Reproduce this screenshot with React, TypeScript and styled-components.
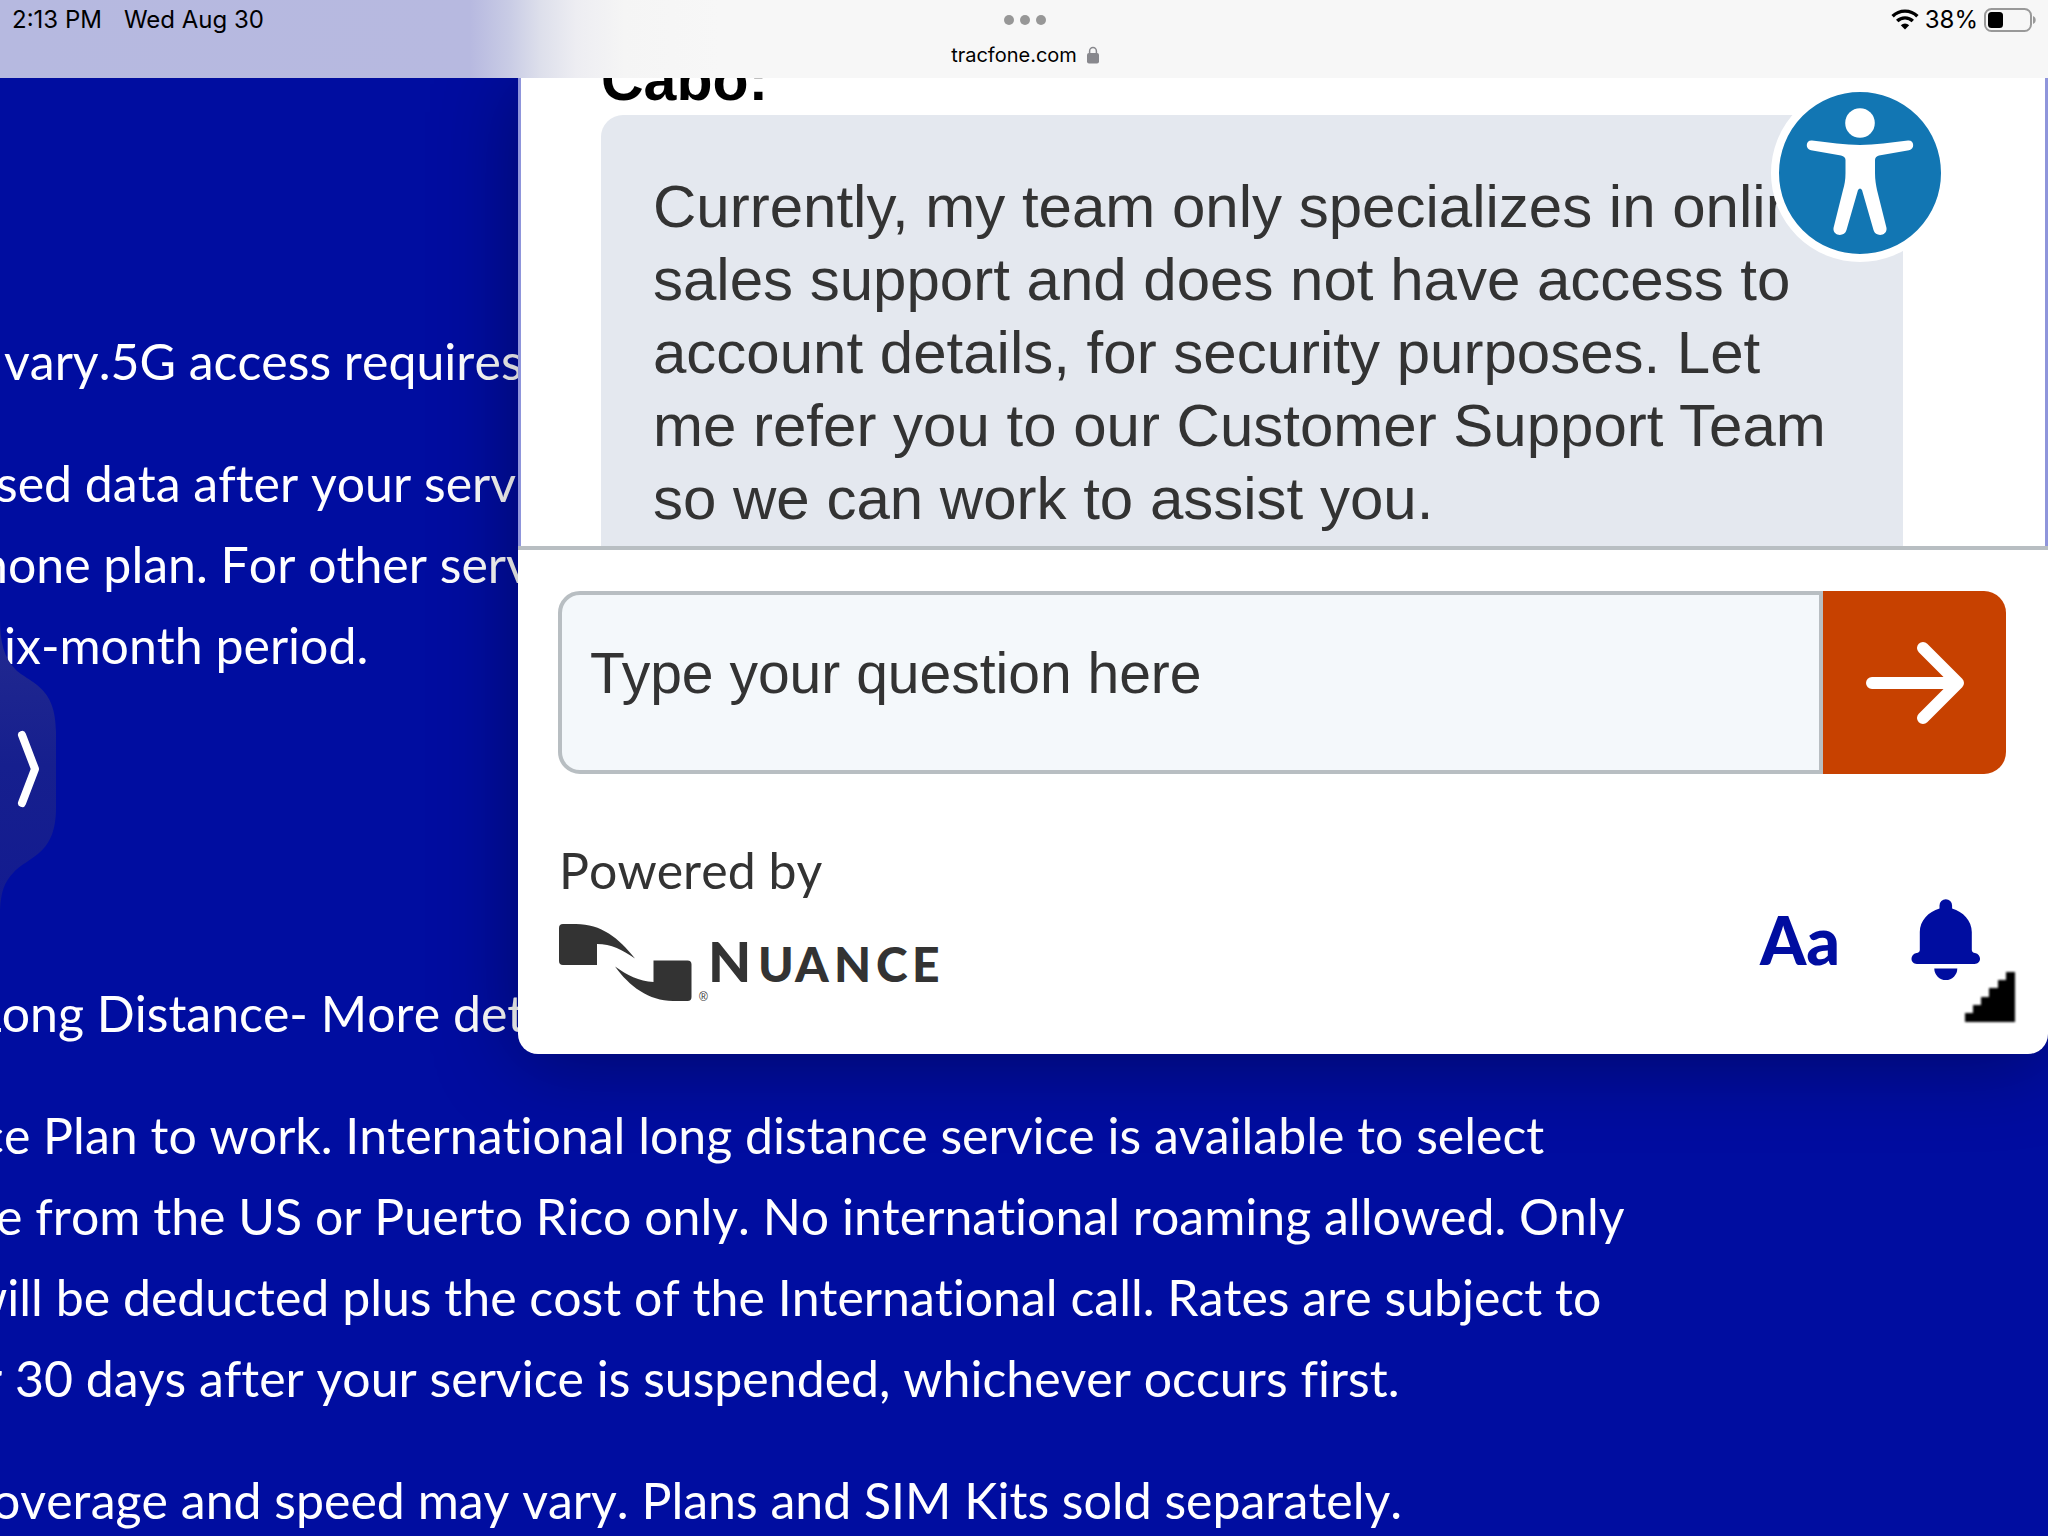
import React from "react";
import styled, { createGlobalStyle } from "styled-components";

const navy = "#000da0";
const ink = "#333333";
const line = "#b8bec2";
const helvetica = `"Liberation Sans", Arial, sans-serif`;
const lato = `Lato, "Open Sans", sans-serif`;

const GlobalStyle = createGlobalStyle`
  * { box-sizing: border-box; }
  html { height: 100%; overflow: hidden; background: ${navy}; }
  body { margin: 0; height: 100%; overflow: hidden; }
  #root { height: 100%; }
`;

const Screen = styled.div`
  display: flex;
  flex-direction: column;
  height: 100vh;
  overflow: hidden;
  background: ${navy};
`;

const StatusBar = styled.header`
  flex: none;
  display: grid;
  grid-template-columns: 1fr auto 1fr;
  height: 78px;
  padding: 6px 10px 0 12px;
  background: linear-gradient(90deg, #b6b9e0 0, #b7b9e0 470px, #c9cce5 510px, #dddfeb 540px, #ededf2 576px, #f5f5f5 624px, #f7f7f7 720px);
  color: #000;
  font: 400 24px/28px Inter, sans-serif;
`;

const Clock = styled.div`
  display: flex;
  gap: 22px;
  align-items: flex-start;
`;

const AddressColumn = styled.div`
  display: flex;
  flex-direction: column;
  align-items: center;
  gap: 17px;
  padding-top: 9px;
`;

const DotsButton = styled.button`
  display: flex;
  gap: 6px;
  padding: 0;
  border: 0;
  background: none;
`;

const Dot = styled.span`
  width: 10px;
  height: 10px;
  border-radius: 50%;
  background: #979797;
`;

const Address = styled.div`
  display: flex;
  align-items: center;
  gap: 10px;
  font: 400 20px/26px Inter, sans-serif;
`;

const Indicators = styled.div`
  display: flex;
  justify-content: flex-end;
  align-items: flex-start;
  gap: 6px;
  height: 28px;

  svg { display: block; margin-top: 2px; }
`;

const Stage = styled.div`
  flex: 1;
  min-height: 0;
  position: relative;
  overflow: hidden;
`;

const Article = styled.main`
  display: flex;
  flex-direction: column;
  gap: 41px;
  padding-top: 243px;
  color: #fff;
  font: 400 50px/81px ${lato};
  font-kerning: none;
  font-variant-ligatures: none;
  white-space: nowrap;
`;

const Terms = styled.section`
  display: flex;
  flex-direction: column;
  gap: 41px;

  & + & { margin-top: 246px; }
`;

const Paragraph = styled.p`
  margin: 0;
`;

const Line = styled.span<{ $pan: number }>`
  display: block;
  margin-left: ${(p) => p.$pan}px;
`;

const SideHandle = styled.button`
  position: absolute;
  left: 0;
  top: 542px;
  padding: 0;
  border: 0;
  background: none;

  svg { display: block; }
`;

const Chat = styled.aside`
  position: absolute;
  top: 0;
  left: 518px;
  right: 0;
  border-radius: 0 0 20px 20px;
  background: #fff;
  box-shadow: 0 6px 84px rgba(0, 0, 0, 0.36);
`;

const Transcript = styled.div`
  height: 468px;
  overflow: hidden;
  padding: 0 142px 0 80px;
  border: solid #8f95db;
  border-width: 0 3px;
`;

const Agent = styled.h2`
  margin: -32px 0 0;
  color: #000;
  font: 700 59px/69px ${helvetica};
`;

const Bubble = styled.p`
  margin: 0;
  padding: 55px 52px;
  border-radius: 22px;
  background: #e4e8ef;
  color: ${ink};
  font: 400 60px/73px ${helvetica};
`;

const Compose = styled.form`
  display: flex;
  padding: 41px 42px 0 40px;
  border-top: 4px solid ${line};
`;

const Question = styled.textarea`
  flex: 1;
  min-width: 0;
  height: 183px;
  padding: 42px 28px;
  border: 4px solid ${line};
  border-radius: 22px 0 0 22px;
  outline: 0;
  resize: none;
  overflow: hidden;
  background: #f4f8fb;
  color: ${ink};
  font: 400 57px/73px ${helvetica};

  &::placeholder { color: ${ink}; opacity: 1; }
`;

const Send = styled.button`
  flex: none;
  display: flex;
  align-items: center;
  justify-content: center;
  width: 183px;
  padding: 0;
  border: 0;
  border-radius: 0 22px 22px 0;
  background: #c74100;
`;

const Footer = styled.footer`
  display: flex;
  justify-content: space-between;
  align-items: flex-end;
  padding: 66px 67px 53px 41px;
`;

const Powered = styled.div`
  display: flex;
  flex-direction: column;
  gap: 24px;
  color: ${ink};
  font: 400 50px/60px ${lato};
  font-kerning: none;

  svg { display: block; }
`;

const Tools = styled.div`
  display: flex;
  align-items: center;
  gap: 71px;
  padding-bottom: 20px;
`;

const Tool = styled.button`
  padding: 0;
  border: 0;
  background: none;
  color: ${navy};
  font: 900 66px/80px ${lato};

  svg { display: block; }
`;

const ResizeGrip = styled.div`
  position: absolute;
  right: 33px;
  bottom: 32px;
  filter: blur(1px);

  svg { display: block; }
`;

const Accessibility = styled.button`
  position: absolute;
  top: 6px;
  right: 99px;
  width: 178px;
  height: 178px;
  padding: 0;
  border: 8px solid #fff;
  border-radius: 50%;
  background: #1276b3;

  svg { display: block; }
`;

type TextLine = { text: string; pan: number };

const upperTerms: TextLine[][] = [
  [{ text: "vary.5G access requires", pan: 4 }],
  [
    { text: "sed data after your service", pan: -4 },
    { text: "hone plan. For other service", pan: -20 },
    { text: "ix-month period.", pan: 4 },
  ],
];

const lowerTerms: TextLine[][] = [
  [{ text: "Long Distance- More details", pan: -24 }],
  [
    { text: "ce Plan to work. International long distance service is available to select", pan: -20 },
    { text: "e from the US or Puerto Rico only. No international roaming allowed. Only", pan: -4 },
    { text: "will be deducted plus the cost of the International call. Rates are subject to", pan: -32 },
    { text: "r 30 days after your service is suspended, whichever occurs first.", pan: -16 },
  ],
  [{ text: "overage and speed may vary. Plans and SIM Kits sold separately.", pan: -8 }],
];

const TermsBlock = ({ paragraphs }: { paragraphs: TextLine[][] }) => (
  <Terms>
    {paragraphs.map((lines, i) => (
      <Paragraph key={i}>
        {lines.map((l) => (
          <Line key={l.text} $pan={l.pan}>{l.text}</Line>
        ))}
      </Paragraph>
    ))}
  </Terms>
);

const LockIcon = () => (
  <svg width="12" height="18" viewBox="0 0 12 18" aria-hidden="true">
    <path d="M2.6 8V5a3.4 3.6 0 0 1 6.8 0v3" fill="none" stroke="#88888d" strokeWidth="1.5" />
    <rect x="0" y="7" width="12" height="10.5" rx="2" fill="#88888d" />
  </svg>
);

const WifiIcon = () => (
  <svg width="28" height="22" viewBox="0 0 28 22" aria-hidden="true">
    <path d="M1.6 8.2a17.6 17.6 0 0 1 24.8 0" fill="none" stroke="#000" strokeWidth="3.4" />
    <path d="M6.2 13a11.2 11.2 0 0 1 15.6 0" fill="none" stroke="#000" strokeWidth="3.4" />
    <path d="M9.8 17.3a6 6 0 0 1 8.4 0L14 21.6z" fill="#000" />
  </svg>
);

const BatteryIcon = () => (
  <svg width="54" height="24" viewBox="0 0 54 24" aria-hidden="true">
    <rect x="1" y="1" width="46" height="22" rx="6.5" fill="none" stroke="#999" strokeWidth="2" />
    <rect x="4" y="4" width="15" height="16" rx="3.5" fill="#000" />
    <path d="M49 8c3.6 1.2 3.6 6.8 0 8z" fill="#999" />
  </svg>
);

const HandleArt = () => (
  <svg width="57" height="290" viewBox="0 0 57 290" aria-hidden="true">
    <defs>
      <linearGradient id="handle" x1="0" y1="0" x2="0" y2="1">
        <stop offset="0" stopColor="#232a90" />
        <stop offset="0.5" stopColor="#161f8e" />
        <stop offset="1" stopColor="#131b90" />
      </linearGradient>
    </defs>
    <path d="M0 0C0 22 4 38 16 50C30 63 56 66 56 112V188C56 234 30 236 14 252C4 262 1 272 0 290Z" fill="url(#handle)" />
    <path d="M22 115L35 149L22 183" fill="none" stroke="#fff" strokeWidth="8" strokeLinecap="round" strokeLinejoin="round" />
  </svg>
);

const ArrowIcon = () => (
  <svg width="98" height="82" viewBox="0 0 98 82" aria-hidden="true">
    <path d="M6 41H90M57 6L92 41L57 76" fill="none" stroke="#fff" strokeWidth="12" strokeLinecap="round" strokeLinejoin="round" />
  </svg>
);

const PersonIcon = () => (
  <svg width="162" height="162" viewBox="0 0 162 162" aria-hidden="true" fill="#fff">
    <circle cx="81" cy="31" r="14.8" />
    <path d="M33 48.500C50 50.500 66 53 81 53S112 50.500 129 48.500C135.500 48 136 57 130 58.300L100 63.500Q96 64.500 96 68V81C96 88 97 93 98 98L107.500 136C108.500 144 96.500 145.500 94.500 138L83 98Q81 95 79 98L67.500 138C65.500 145.500 53.500 144 54.500 136L64 98C65.500 93 66.500 88 66.500 81V68Q66.500 64.500 62 63.500L32 58.300C26 57 26.500 48 33 48.500Z" />
  </svg>
);

const BellIcon = () => (
  <svg width="70" height="82" viewBox="0 0 70 82" aria-hidden="true" fill="currentColor">
    <path d="M28.500 6.500a6.300 6.300 0 0 1 12.600 0V9.500C52 12.500 60.800 22 60.800 33V51Q61 53.500 64 54C71 55.500 70.500 65 63.500 65H6C-1 65-1.500 55.500 5.500 54Q8.700 53.500 8.800 51V33C8.800 22 17.500 12.500 28.500 9.500Z" />
    <path d="M23.300 69.500H46.300A11.500 11.500 0 0 1 23.300 69.500Z" />
  </svg>
);

const NuanceLogo = () => (
  <svg width="384" height="77" viewBox="0 0 384 77" role="img" aria-label="Nuance" fill="#333">
    <path d="M4 0H17C42 0 60 14 76 34.500C64 26 52 20 38 20V41H4Q0 41 0 37V4Q0 0 4 0Z" />
    <path d="M56 42.500C68 51 80 57.500 94.500 58V36.500H128.500Q132.500 36.500 132.500 40.500V73Q132.500 77 128.500 77H114C90 77 70 62 56 42.500Z" />
    <text x="140" y="77" fontFamily="Liberation Sans" fontSize="12">®</text>
    <text y="58" fontFamily="Lato" fontWeight="900" fontSize="48" x="149 199 236 275 317 353">
      <tspan fontSize="56">N</tspan>UANCE
    </text>
  </svg>
);

const GripIcon = () => (
  <svg width="51" height="51" viewBox="0 0 51 51" aria-hidden="true">
    <path d="M1 51V42H9V34H17V26H25V17H34V9H42V1H51V51Z" fill="#000" />
  </svg>
);

export default function App() {
  return (
    <Screen>
      <GlobalStyle />
      <StatusBar>
        <Clock>
          <span>2:13 PM</span>
          <span>Wed Aug 30</span>
        </Clock>
        <AddressColumn>
          <DotsButton type="button" aria-label="Window options">
            <Dot /><Dot /><Dot />
          </DotsButton>
          <Address>
            <span>tracfone.com</span>
            <LockIcon />
          </Address>
        </AddressColumn>
        <Indicators>
          <WifiIcon />
          <span>38%</span>
          <BatteryIcon />
        </Indicators>
      </StatusBar>
      <Stage>
        <Article>
          <TermsBlock paragraphs={upperTerms} />
          <TermsBlock paragraphs={lowerTerms} />
        </Article>
        <SideHandle type="button" aria-label="Show side window">
          <HandleArt />
        </SideHandle>
        <Chat aria-label="Chat">
          <Transcript>
            <Agent>Cabo:</Agent>
            <Bubble>
              Currently, my team only specializes in online sales support and does not have access to
              account details, for security purposes. Let me refer you to our Customer Support Team so
              we can work to assist you.
            </Bubble>
          </Transcript>
          <Compose onSubmit={(e) => e.preventDefault()}>
            <Question rows={1} aria-label="Your question" placeholder="Type your question here" />
            <Send type="submit" aria-label="Send">
              <ArrowIcon />
            </Send>
          </Compose>
          <Footer>
            <Powered>
              <span>Powered by</span>
              <NuanceLogo />
            </Powered>
            <Tools>
              <Tool type="button" aria-label="Text size">Aa</Tool>
              <Tool type="button" aria-label="Notifications">
                <BellIcon />
              </Tool>
            </Tools>
          </Footer>
          <ResizeGrip>
            <GripIcon />
          </ResizeGrip>
        </Chat>
        <Accessibility type="button" aria-label="Accessibility options">
          <PersonIcon />
        </Accessibility>
      </Stage>
    </Screen>
  );
}
